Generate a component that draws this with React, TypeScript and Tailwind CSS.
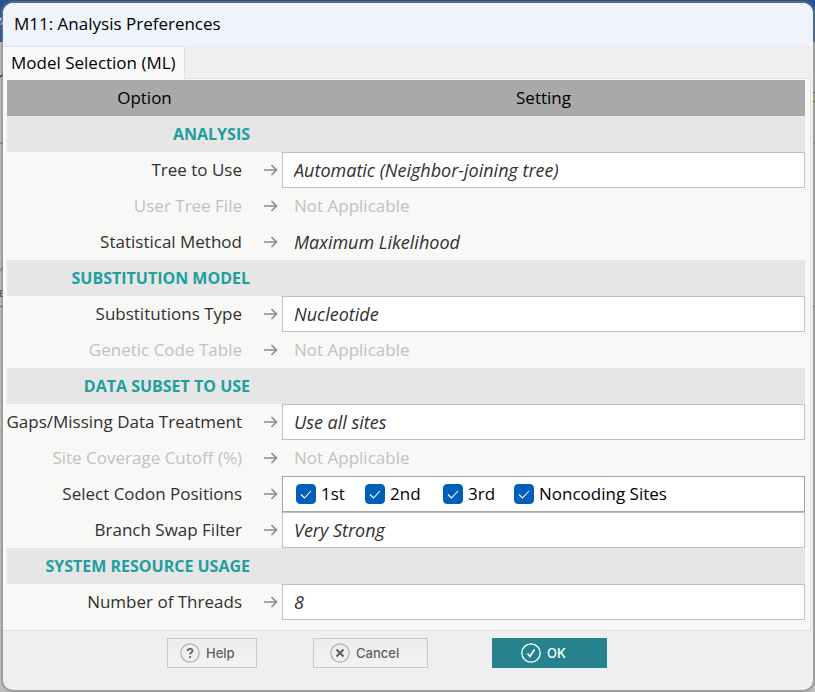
import React from "react";

type Row =
  | { kind: "section"; label: string }
  | { kind: "select"; id: string; label: string; value: string }
  | { kind: "input"; id: string; label: string; value: string }
  | { kind: "fixed"; label: string; value: string }
  | { kind: "off"; label: string }
  | { kind: "codons"; label: string };

const rows: Row[] = [
  { kind: "section", label: "ANALYSIS" },
  { kind: "select", id: "tree", label: "Tree to Use", value: "Automatic (Neighbor-joining tree)" },
  { kind: "off", label: "User Tree File" },
  { kind: "fixed", label: "Statistical Method", value: "Maximum Likelihood" },
  { kind: "section", label: "SUBSTITUTION MODEL" },
  { kind: "select", id: "substitutions", label: "Substitutions Type", value: "Nucleotide" },
  { kind: "off", label: "Genetic Code Table" },
  { kind: "section", label: "DATA SUBSET TO USE" },
  { kind: "select", id: "gaps", label: "Gaps/Missing Data Treatment", value: "Use all sites" },
  { kind: "off", label: "Site Coverage Cutoff (%)" },
  { kind: "codons", label: "Select Codon Positions" },
  { kind: "select", id: "swap", label: "Branch Swap Filter", value: "Very Strong" },
  { kind: "section", label: "SYSTEM RESOURCE USAGE" },
  { kind: "input", id: "threads", label: "Number of Threads", value: "8" },
];

const codons = [
  { id: "first", label: "1st", width: "w-[69px]" },
  { id: "second", label: "2nd", width: "w-[78px]" },
  { id: "third", label: "3rd", width: "w-[71px]" },
  { id: "noncoding", label: "Noncoding Sites", width: "" },
];

const field =
  "block h-9 w-full appearance-none rounded-none border border-[#c0c0c0] bg-white px-[11px] text-lg leading-6 italic text-[#303030] outline-none";

function Arrow() {
  return (
    <svg className="h-3.5 w-3.5 shrink-0" viewBox="0 0 14 14" fill="none" stroke="#888888" strokeWidth="1.5" aria-hidden="true">
      <path d="M0 7H12.5M7.5 2L12.5 7L7.5 12" />
    </svg>
  );
}

function Codons() {
  return (
    <div className="flex h-9 items-center border border-[#a4a4a4] bg-white pl-[13px]">
      {codons.map((c) => (
        <div key={c.id} className={`flex items-center gap-[5px] ${c.width}`}>
          <span className="grid h-5 w-5 shrink-0">
            <input
              id={c.id}
              type="checkbox"
              defaultChecked
              className="col-start-1 row-start-1 h-5 w-5 appearance-none rounded border border-[#005fb8] bg-white checked:bg-[#005fb8]"
            />
            <svg className="pointer-events-none col-start-1 row-start-1 h-5 w-5" viewBox="0 0 20 20" fill="none" stroke="white" strokeWidth="1.1" aria-hidden="true">
              <path d="M5 10.5L8.5 14L15 7" />
            </svg>
          </span>
          <label htmlFor={c.id} className="whitespace-nowrap text-black">{c.label}</label>
        </div>
      ))}
    </div>
  );
}

function Setting({ row }: { row: Row }) {
  switch (row.kind) {
    case "select":
      return (
        <select id={row.id} className={field}>
          <option>{row.value}</option>
        </select>
      );
    case "input":
      return <input id={row.id} defaultValue={row.value} className={field} />;
    case "fixed":
      return <span className="pl-3 text-lg leading-6 italic">{row.value}</span>;
    case "off":
      return <span className="pl-3 text-[#c2c2c2]">Not Applicable</span>;
    case "codons":
      return <Codons />;
    default:
      return null;
  }
}

function OptionRow({ row }: { row: Row }) {
  if (row.kind === "section") {
    return (
      <tr className="h-9 bg-[#e6e6e6]">
        <th scope="rowgroup" className="p-0 pr-8 text-right text-base font-bold text-[#209f9f]">{row.label}</th>
        <td className="p-0" />
      </tr>
    );
  }
  const hasField = row.kind === "select" || row.kind === "input";
  return (
    <tr className="h-9">
      <th scope="row" className="p-0 font-normal">
        <div className="flex items-center justify-end gap-[22px] pr-1">
          {hasField ? (
            <label htmlFor={row.id} className="whitespace-nowrap">{row.label}</label>
          ) : (
            <span className={row.kind === "off" ? "whitespace-nowrap text-[#c2c2c2]" : "whitespace-nowrap"}>{row.label}</span>
          )}
          <Arrow />
        </div>
      </th>
      <td className="p-0"><Setting row={row} /></td>
    </tr>
  );
}

function Ring({ stroke, mark, children }: { stroke: string; mark: string; children: React.ReactNode }) {
  return (
    <svg className="h-5 w-5 shrink-0" viewBox="0 0 20 20" fill="none" aria-hidden="true">
      <circle cx="10" cy="10" r="9.2" stroke={stroke} strokeWidth="1.3" />
      <g stroke={mark} strokeWidth="2">{children}</g>
    </svg>
  );
}

const plainButton =
  "flex h-[30px] items-center gap-1.5 border border-[#c8c8c8] bg-linear-to-b from-[#ececec] to-[#f3f3f3] text-[13px] font-medium text-[#606060]";

/* Slivers of the tree window that show on both sides of the dialog. */
function Backdrop() {
  return (
    <>
      <div className="absolute inset-x-0 top-0 h-[42px] bg-[#2a5293]" />
      <div className="absolute inset-x-0 top-[142px] h-0.5 bg-[#8e8e8e]" />
      <div className="absolute inset-x-0 top-[306px] h-px bg-[#c83c3c]" />
      <svg className="absolute top-0 left-0 h-[310px] w-[3px]" viewBox="0 0 3 310" fill="none" aria-hidden="true">
        <path d="M2.5 18H0.5V20.5L2.5 22V24H0" stroke="#c8d4e8" />
        <path d="M0 77L3 74.5" stroke="#303030" strokeWidth="1.5" />
        <path d="M0 271L3 267" stroke="#c86454" strokeWidth="1.5" />
        <path d="M0.5 290V297M0 290.5H3M0 293.5H3M0 296.5H3" stroke="#606060" />
      </svg>
      <svg className="absolute top-0 right-0 h-[310px] w-[3px]" viewBox="0 0 3 310" aria-hidden="true">
        <path d="M0 92H3V102H0Z" fill="#6b4a20" />
        <path d="M1 93H3V101H1Z" fill="#d8b478" />
      </svg>
    </>
  );
}

export default function App() {
  return (
    <div className="relative min-h-screen bg-[#bcbcbc] pt-[3px] pr-0.5 pb-0.5 pl-[3px] font-['Open_Sans','Noto_Sans',sans-serif] text-[17px] leading-6 text-[#303030]">
      <Backdrop />
      <main className="relative flex min-h-[calc(100vh-5px)] flex-col overflow-hidden rounded-[10px] bg-[#efefef] shadow-[0_0_0_2px_#80808080]">
        <h1 className="h-[43px] bg-[#eff3fb] pt-[9px] pl-[11px] text-black">M11: Analysis Preferences</h1>
        <div role="tablist" className="flex">
          <button type="button" role="tab" aria-selected="true" className="h-[33px] border-t border-r border-[#e0e0e0] bg-[#f9f9f9] px-2 text-black">
            Model Selection (ML)
          </button>
          <div className="mr-0.5 flex-1 border-b border-[#e0e0e0]" />
        </div>
        <section role="tabpanel" className="mr-0.5 border-r border-b border-[#e0e0e0] bg-[#f8f8f6] pt-px pr-[5px] pb-2.5 pl-1">
          <table className="w-full table-fixed border-collapse">
            <colgroup>
              <col className="w-[275px]" />
              <col />
            </colgroup>
            <thead>
              <tr className="h-9 bg-[#a9a9a9] text-black">
                <th scope="col" className="p-0 font-normal">Option</th>
                <th scope="col" className="p-0 font-normal">Setting</th>
              </tr>
            </thead>
            <tbody>
              {rows.map((row) => <OptionRow key={row.label} row={row} />)}
            </tbody>
          </table>
        </section>
        <footer className="flex px-4 pt-[7px] pl-[164px] font-['Inter','Open_Sans',sans-serif]">
          <button type="button" className={`${plainButton} w-[90px] pl-3`}>
            <Ring stroke="#b4b4b4" mark="#606060">
              <path d="M7.5 8C7.5 5.2 12.5 5.2 12.5 8C12.5 9.5 10 9.6 10 11.5M10 13V15" strokeWidth="1.7" />
            </Ring>
            Help
          </button>
          <button type="button" className={`${plainButton} ml-14 w-[115px] pl-4`}>
            <Ring stroke="#b4b4b4" mark="#606060"><path d="M6.5 6.5L13.5 13.5M13.5 6.5L6.5 13.5" /></Ring>
            Cancel
          </button>
          <button type="button" className="ml-16 flex h-[30px] w-[115px] items-center gap-1.5 bg-[#26828c] pl-[29px] text-[13px] font-medium text-white">
            <Ring stroke="white" mark="white"><path d="M6.5 10.5L9 13.5L13.5 6.5" strokeWidth="1.6" /></Ring>
            OK
          </button>
        </footer>
      </main>
    </div>
  );
}
